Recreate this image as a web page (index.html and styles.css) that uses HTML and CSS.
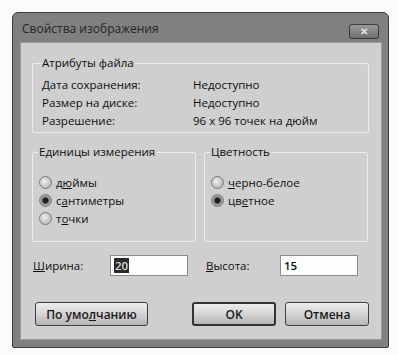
FILE: index.html
```html
<!DOCTYPE html>
<html lang="ru">
<head>
  <meta charset="UTF-8">
  <title>Свойства изображения</title>
  <link rel="stylesheet" href="styles.css">
</head>
<body>
  <div class="dialog">
    <div class="titlebar">
      <span class="title">Свойства изображения</span>
      <span class="close">&#x2715;</span>
    </div>

    <div class="client">
      <fieldset class="group attrs">
        <legend>Атрибуты файла</legend>
        <div class="row"><span class="key">Дата сохранения:</span><span>Недоступно</span></div>
        <div class="row"><span class="key">Размер на диске:</span><span>Недоступно</span></div>
        <div class="row"><span class="key">Разрешение:</span><span>96 x 96 точек на дюйм</span></div>
      </fieldset>

      <div class="pair">
        <fieldset class="group opts">
          <legend>Единицы измерения</legend>
          <div class="radio"><span class="dot"></span>д<u>ю</u>ймы</div>
          <div class="radio"><span class="dot on"></span>с<u>а</u>нтиметры</div>
          <div class="radio"><span class="dot"></span>т<u>о</u>чки</div>
        </fieldset>
        <fieldset class="group opts">
          <legend>Цветность</legend>
          <div class="radio"><span class="dot"></span><u>ч</u>ерно-белое</div>
          <div class="radio"><span class="dot on"></span>цв<u>е</u>тное</div>
        </fieldset>
      </div>

      <div class="sizes">
        <span class="lbl"><u>Ш</u>ирина:</span>
        <span class="field"><span class="sel">20</span></span>
        <span class="lbl"><u>В</u>ысота:</span>
        <span class="field">15</span>
      </div>

      <div class="buttons">
        <button class="btn wide">По умо<u>л</u>чанию</button>
        <button class="btn ok">OK</button>
        <button class="btn">Отмена</button>
      </div>
    </div>
  </div>
</body>
</html>
```

FILE: styles.css
```css
* {
  box-sizing: border-box;
}
body {
  margin: 0;
  background: #fbfbfb;
  font-family: 'Open Sans', 'Noto Sans', sans-serif;
  font-size: 11.5px;
  color: #0e0e0e;
}
.dialog {
  margin: 12px 0 0 12px;
  width: 377px;
  height: 336px;
  background: #808080;
  border: 1px solid #3c3c3c;
  border-radius: 6px 6px 2px 2px;
  padding: 0 6px 7px 7px;
  display: flex;
  flex-direction: column;
}
.titlebar {
  height: 29px;
  display: flex;
  align-items: center;
  justify-content: space-between;
  padding: 2px 3px 0 2px;
}
.title {
  color: #262626;
  font-size: 12px;
}
.close {
  width: 30px;
  height: 15px;
  margin-top: 5px;
  background: linear-gradient(#9a9a9a, #6e6e6e);
  border: 1px solid #3a3a3a;
  border-radius: 3px;
  color: #e6e6e6;
  font-size: 10px;
  font-weight: bold;
  line-height: 13px;
  text-align: center;
}
.client {
  flex: 1;
  background: #cfcfcf;
  border: 1px solid #9c9c9c;
  padding: 13px 12px 0 11px;
}
.group {
  margin: 0;
  padding: 0 0 0 9px;
  border: 1px solid #ededed;
  border-radius: 2px;
}
.group legend {
  padding: 0 1px;
  margin-left: -1px;
  line-height: 14px;
}
.attrs {
  height: 77px;
  padding-top: 5px;
}
.row {
  display: flex;
  height: 18px;
  align-items: center;
}
.key {
  width: 151px;
}
.pair {
  display: grid;
  grid-template-columns: 164px 164px;
  gap: 8px;
  margin-top: 12px;
}
.opts {
  height: 97px;
  padding-top: 14px;
  padding-left: 6px;
}
.radio {
  display: flex;
  align-items: center;
  height: 18px;
}
.dot {
  width: 13px;
  height: 13px;
  border-radius: 50%;
  border: 1px solid #7a7a7a;
  background: radial-gradient(circle at 40% 40%, #f0f0f0, #a4a4a4);
  margin-right: 4px;
}
.dot.on {
  background: radial-gradient(circle, #1e1e1e 0 2.5px, #8c8c8c 3.5px, #c8c8c8);
}
.sizes {
  display: flex;
  align-items: center;
  margin-top: 13px;
  height: 21px;
}
.lbl {
  width: 78px;
  padding-left: 1px;
}
.lbl + .field + .lbl {
  width: 75px;
  margin-left: 17px;
}
.field {
  width: 78px;
  height: 21px;
  background: #fdfdfd;
  border: 1px solid #8a8a8a;
  padding: 2px 3px;
  line-height: 15px;
  font-weight: 600;
}
.sel {
  background: #2a2a2a;
  color: #d8d8d8;
  padding: 0 1px;
}
.buttons {
  display: flex;
  margin-top: 26px;
}
.btn {
  height: 24px;
  width: 84px;
  font-family: inherit;
  font-size: 12px;
  font-weight: 600;
  color: #1a1a1a;
  background: linear-gradient(#eeeeee, #d4d4d4 50%, #b5b5b5);
  border: 1px solid #3e3e3e;
  border-radius: 3px;
  padding: 0;
}
.btn.wide {
  width: 113px;
  margin-left: 3px;
}
.btn.ok {
  margin-left: 44px;
  margin-right: 9px;
  border: 2px solid #333;
}
```
